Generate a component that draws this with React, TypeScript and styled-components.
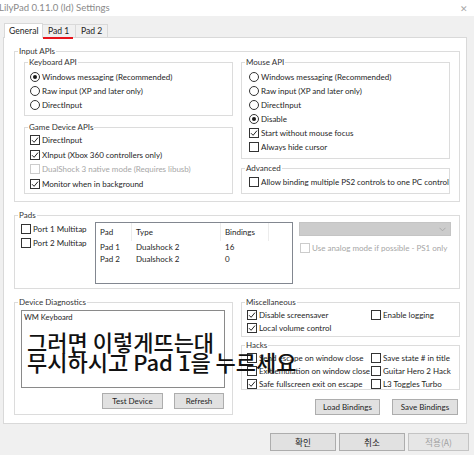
import React from "react";
import styled, { createGlobalStyle } from "styled-components";

const UI_FONT = `Lato, "Noto Sans", "Noto Sans CJK KR", sans-serif`;

interface OptionProps {
  label: string;
  checked?: boolean;
  disabled?: boolean;
  radio?: boolean;
  h?: number;
}

const Option = ({ label, checked, disabled, radio, h = 14 }: OptionProps) => (
  <OptionRow $h={h} $disabled={disabled}>
    {radio ? (
      <RadioMark>{checked && <RadioDot />}</RadioMark>
    ) : (
      <CheckMark $disabled={disabled}>
        {checked && (
          <svg width="8" height="8" viewBox="0 0 8 8">
            <path d="M1 4.2 L3.1 6.3 L7 1.6" fill="none" stroke="#222" strokeWidth="1" />
          </svg>
        )}
      </CheckMark>
    )}
    <span>{label}</span>
  </OptionRow>
);

interface GroupProps {
  title: string;
  h: number;
  pad?: string;
  children: React.ReactNode;
}

const GroupBox = ({ title, h, pad, children }: GroupProps) => (
  <Group $h={h}>
    <Legend>{title}</Legend>
    <GroupBody $pad={pad}>{children}</GroupBody>
  </Group>
);

const pads = [
  { pad: "Pad 1", type: "Dualshock 2", bindings: "16" },
  { pad: "Pad 2", type: "Dualshock 2", bindings: "0" },
];

export default function App() {
  return (
    <Window>
      <GlobalStyle />
      <TitleBar>
        <Title>LilyPad 0.11.0 (ld) Settings</Title>
        <Close>✕</Close>
      </TitleBar>

      <TabStrip>
        <Tab $active $w={39}>General</Tab>
        <Tab $w={34} $marked>Pad 1</Tab>
        <Tab $w={33}>Pad 2</Tab>
      </TabStrip>

      <Panel>
        <GroupBox title="Input APIs" h={156} pad="0 10px 7px 9px">
          <Columns>
            <Column $gap={6}>
              <GroupBox title="Keyboard API" h={59} pad="2px 4px 0 5px">
                <Option radio checked label="Windows messaging (Recommended)" />
                <Option radio label="Raw input (XP and later only)" />
                <Option radio label="DirectInput" />
              </GroupBox>
              <GroupBox title="Game Device APIs" h={72} pad="0 4px 0 5px">
                <Option checked h={14.5} label="DirectInput" />
                <Option checked h={14.5} label="XInput (Xbox 360 controllers only)" />
                <Option disabled h={14.5} label="DualShock 3 native mode (Requires libusb)" />
                <Option checked h={14.5} label="Monitor when in background" />
              </GroupBox>
            </Column>
            <Column $gap={4}>
              <GroupBox title="Mouse API" h={102} pad="2px 4px 0 7px">
                <Option radio label="Windows messaging (Recommended)" />
                <Option radio label="Raw input (XP and later only)" />
                <Option radio label="DirectInput" />
                <Option radio checked label="Disable" />
                <Option checked label="Start without mouse focus" />
                <Option label="Always hide cursor" />
              </GroupBox>
              <GroupBox title="Advanced" h={31} pad="1px 4px 0 7px">
                <Option label="Allow binding multiple PS2 controls to one PC control" />
              </GroupBox>
            </Column>
          </Columns>
        </GroupBox>

        <GroupBox title="Pads" h={79} pad="1px 8px 0 6px">
          <PadsGrid>
            <div>
              <Option label="Port 1 Multitap" />
              <Option label="Port 2 Multitap" />
            </div>
            <PadList>
              <PadRow $header>
                <PadCell $header>Pad</PadCell>
                <PadCell $header>Type</PadCell>
                <PadCell $header>Bindings</PadCell>
              </PadRow>
              {pads.map((p) => (
                <PadRow key={p.pad}>
                  <PadCell>{p.pad}</PadCell>
                  <PadCell>{p.type}</PadCell>
                  <PadCell>{p.bindings}</PadCell>
                </PadRow>
              ))}
            </PadList>
            <div>
              <Select>
                <svg width="7" height="5" viewBox="0 0 7 5">
                  <path d="M0.5 0.8 L3.5 3.8 L6.5 0.8" fill="none" stroke="#aaa" strokeWidth="1" />
                </svg>
              </Select>
              <AnalogRow>
                <Option disabled label="Use analog mode if possible - PS1 only" />
              </AnalogRow>
            </div>
          </PadsGrid>
        </GroupBox>

        <BottomGrid>
          <GroupBox title="Device Diagnostics" h={118} pad="2px 7px 0 6px">
            <DeviceList>WM Keyboard</DeviceList>
            <ButtonRow $gap={11} $mt={5} $pr={1}>
              <Button $w={61}>Test Device</Button>
              <Button $w={50}>Refresh</Button>
            </ButtonRow>
          </GroupBox>
          <Column $gap={3}>
            <GroupBox title="Miscellaneous" h={40} pad="0 4px 0 5px">
              <TwoCols>
                <Option checked h={13} label="Disable screensaver" />
                <Option h={13} label="Enable logging" />
                <Option checked h={13} label="Local volume control" />
              </TwoCols>
            </GroupBox>
            <GroupBox title="Hacks" h={50} pad="0 4px 0 5px">
              <TwoCols>
                <Option h={13} label="Send escape on window close" />
                <Option h={13} label="Save state # in title" />
                <Option h={13} label="Exit emulation on window close" />
                <Option h={13} label="Guitar Hero 2 Hack" />
                <Option checked h={13} label="Safe fullscreen exit on escape" />
                <Option h={13} label="L3 Toggles Turbo" />
              </TwoCols>
            </GroupBox>
            <ButtonRow $gap={12} $mt={6} $pr={2}>
              <Button $w={65}>Load Bindings</Button>
              <Button $w={66}>Save Bindings</Button>
            </ButtonRow>
          </Column>
        </BottomGrid>
      </Panel>

      <Footer>
        <DialogButton>확인</DialogButton>
        <DialogButton>취소</DialogButton>
        <DialogButton $disabled $w={61}>적용(A)</DialogButton>
      </Footer>

      <Caption>
        그러면 이렇게뜨는대
        <br />
        무시하시고 Pad 1을 누르세요
      </Caption>
    </Window>
  );
}

const GlobalStyle = createGlobalStyle`
  html, body {
    margin: 0;
    padding: 0;
    background: #f0f0f0;
  }
  * {
    box-sizing: border-box;
  }
`;

const Window = styled.div`
  position: relative;
  width: 474px;
  height: 455px;
  overflow: hidden;
  background: #f0f0f0;
  font-family: ${UI_FONT};
  font-size: 8px;
  color: #1e1e1e;
  display: flex;
  flex-direction: column;
`;

const TitleBar = styled.div`
  height: 16px;
  background: #ffffff;
  display: flex;
  align-items: center;
  justify-content: space-between;
  padding-right: 6px;
`;

const Title = styled.span`
  margin-left: -1px;
  font-size: 9.6px;
  line-height: 12px;
  color: #8a8a8a;
`;

const Close = styled.span`
  font-size: 9px;
  color: #a8a8a8;
`;

const TabStrip = styled.div`
  display: flex;
  align-items: flex-end;
  height: 14px;
  margin: 7px 0 0 4px;
  position: relative;
  z-index: 1;
`;

const Tab = styled.div<{ $active?: boolean; $w: number; $marked?: boolean }>`
  position: relative;
  width: ${(p) => p.$w}px;
  height: ${(p) => (p.$active ? 15 : 13)}px;
  margin-bottom: ${(p) => (p.$active ? -1 : 0)}px;
  margin-left: ${(p) => (p.$active ? 0 : -1)}px;
  padding: ${(p) => (p.$active ? "1px 0 0 4px" : "0 0 0 5px")};
  background: ${(p) => (p.$active ? "#ffffff" : "#f0f0f0")};
  border: 1px solid #d9d9d9;
  border-bottom: none;
  line-height: 12px;
  font-size: 8.6px;
  white-space: nowrap;

  &::after {
    content: "";
    display: ${(p) => (p.$marked ? "block" : "none")};
    position: absolute;
    left: 0;
    bottom: -2px;
    width: 30px;
    height: 2px;
    background: #e8141c;
  }
`;

const Panel = styled.div`
  margin: 0 7px 0 3px;
  height: 387px;
  background: #ffffff;
  border: 1px solid #d9d9d9;
  padding: 8px 6px 8px 10px;
  display: flex;
  flex-direction: column;
  gap: 8px;
`;

const Group = styled.fieldset<{ $h: number }>`
  margin: 0;
  padding: 0;
  min-width: 0;
  height: ${(p) => p.$h}px;
  border: 1px solid #dcdcdc;
`;

const Legend = styled.legend`
  margin-left: 3px;
  padding: 0 1px;
  font-size: 8px;
  line-height: 11px;
  color: #333;
`;

const GroupBody = styled.div<{ $pad?: string }>`
  padding: ${(p) => p.$pad ?? "0 5px"};
`;

const Columns = styled.div`
  display: grid;
  grid-template-columns: 209px 209px;
  column-gap: 8px;
`;

const Column = styled.div<{ $gap: number }>`
  display: flex;
  flex-direction: column;
  gap: ${(p) => p.$gap}px;
  min-width: 0;
`;

const OptionRow = styled.div<{ $h: number; $disabled?: boolean }>`
  display: flex;
  align-items: center;
  gap: 2px;
  height: ${(p) => p.$h}px;
  white-space: nowrap;
  color: ${(p) => (p.$disabled ? "#a6a6a6" : "#1e1e1e")};
`;

const CheckMark = styled.span<{ $disabled?: boolean }>`
  flex: none;
  width: 10px;
  height: 10px;
  border: 1px solid ${(p) => (p.$disabled ? "#cccccc" : "#333333")};
  background: #ffffff;
  display: flex;
  align-items: center;
  justify-content: center;
`;

const RadioMark = styled.span`
  flex: none;
  width: 10px;
  height: 10px;
  border: 1px solid #333333;
  border-radius: 50%;
  background: #ffffff;
  display: flex;
  align-items: center;
  justify-content: center;
`;

const RadioDot = styled.span`
  width: 4px;
  height: 4px;
  border-radius: 50%;
  background: #1a1a1a;
`;

const PadsGrid = styled.div`
  display: grid;
  grid-template-columns: 68px 198px minmax(0, 1fr);
  column-gap: 6px;
`;

const PadList = styled.div`
  height: 62px;
  border: 1px solid #828790;
  background: #ffffff;
`;

const PadRow = styled.div<{ $header?: boolean }>`
  display: grid;
  grid-template-columns: 36px 89px 48px;
  height: ${(p) => (p.$header ? 18 : 12)}px;
  align-items: stretch;
`;

const PadCell = styled.div<{ $header?: boolean }>`
  display: flex;
  align-items: center;
  padding-left: 4px;
  border-right: 1px solid ${(p) => (p.$header ? "#ececec" : "transparent")};
`;

const Select = styled.div`
  height: 14px;
  background: #cccccc;
  border: 1px solid #c4c4c4;
  display: flex;
  align-items: center;
  justify-content: flex-end;
  padding-right: 4px;
`;

const AnalogRow = styled.div`
  margin-top: 5px;
  padding-left: 1px;
`;

const BottomGrid = styled.div`
  display: grid;
  grid-template-columns: 219px minmax(0, 1fr);
  column-gap: 8px;
  align-items: start;
`;

const DeviceList = styled.div`
  height: 78px;
  border: 1px solid #8a8a8a;
  padding: 1px 2px;
  font-size: 7.6px;
  line-height: 11px;
`;

const ButtonRow = styled.div<{ $gap: number; $mt: number; $pr: number }>`
  display: flex;
  justify-content: flex-end;
  gap: ${(p) => p.$gap}px;
  margin-top: ${(p) => p.$mt}px;
  padding-right: ${(p) => p.$pr}px;
`;

const Button = styled.div<{ $w: number }>`
  width: ${(p) => p.$w}px;
  height: 16px;
  background: #e1e1e1;
  border: 1px solid #adadad;
  display: flex;
  align-items: center;
  justify-content: center;
  white-space: nowrap;
`;

const TwoCols = styled.div`
  display: grid;
  grid-template-columns: 124px minmax(0, 1fr);
`;

const Footer = styled.div`
  display: flex;
  justify-content: flex-end;
  gap: 3px;
  padding: 9px 5px 0 0;
`;

const DialogButton = styled.div<{ $disabled?: boolean; $w?: number }>`
  width: ${(p) => p.$w ?? 66}px;
  height: 18px;
  background: ${(p) => (p.$disabled ? "#e6e6e6" : "#e1e1e1")};
  border: 1px solid ${(p) => (p.$disabled ? "#c4c4c4" : "#adadad")};
  color: ${(p) => (p.$disabled ? "#a0a0a0" : "#1e1e1e")};
  font-family: "Noto Sans CJK KR", "Noto Sans", sans-serif;
  font-size: 8.6px;
  display: flex;
  align-items: center;
  justify-content: center;
`;

const Caption = styled.div`
  position: absolute;
  left: 27px;
  top: 331px;
  font-family: "Noto Sans CJK KR", sans-serif;
  font-weight: 500;
  font-size: 22px;
  line-height: 20px;
  color: #111111;
  white-space: nowrap;
  pointer-events: none;
`;
